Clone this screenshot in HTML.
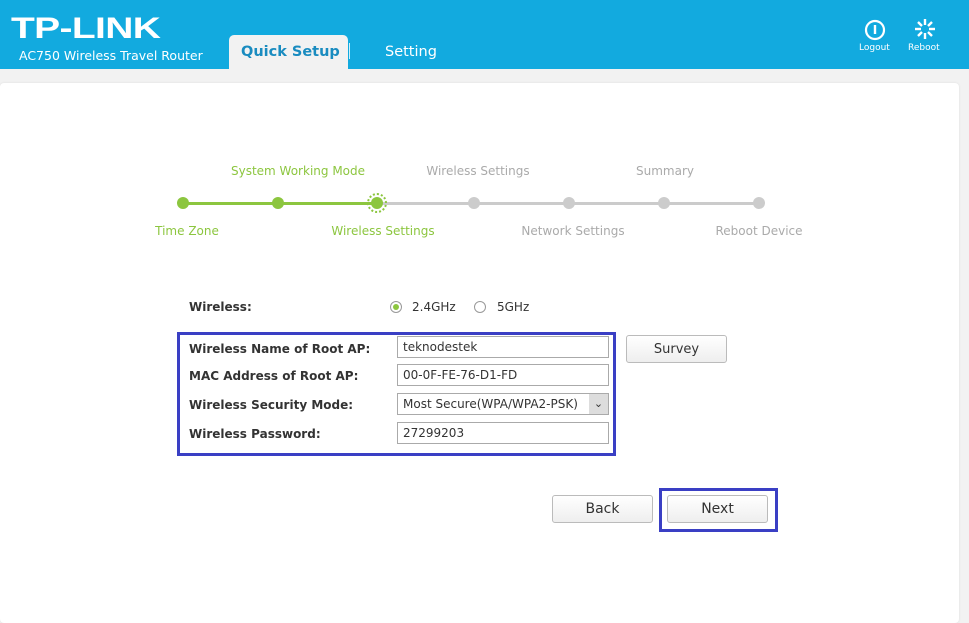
<!DOCTYPE html>
<html><head><style>
*{margin:0;padding:0;box-sizing:border-box}
body{width:969px;height:613px;background:#f2f2f2;font-family:"DejaVu Sans","Liberation Sans",sans-serif;position:relative;overflow:hidden}
.hdr{position:absolute;left:0;top:0;width:969px;height:69px;background:#12aadf}
.abs{position:absolute;white-space:nowrap}
.card{position:absolute;left:0;top:83px;width:959px;height:540px;background:#fff;border-radius:4px;box-shadow:0 0 2px #ddd}
.lbl{font-size:12px;font-weight:bold;color:#333}
.inp{position:absolute;height:22px;border:1px solid #aaa;font-size:12px;color:#333;padding:3px 5px;background:#fff}
.btn{position:absolute;height:28px;border:1px solid #bbb;border-radius:3px;background:linear-gradient(#fff,#eee);font-size:14px;color:#333;text-align:center;line-height:26px}
.dot{position:absolute;width:12px;height:12px;border-radius:50%;top:197px}
.step{font-size:12px;position:absolute;transform:translateX(-50%);white-space:nowrap}
</style></head><body>
<div class="hdr"></div>
<div class="abs" style="left:11px;top:14px;font-family:'Liberation Sans',sans-serif;font-weight:900;font-size:30px;color:#fff;letter-spacing:-0.5px;transform:scaleX(1.3);transform-origin:left;line-height:30px">TP-LINK</div>
<div class="abs" style="left:19px;top:48px;font-size:12.5px;color:#fff">AC750 Wireless Travel Router</div>
<div class="abs" style="left:229px;top:35px;width:119px;height:34px;background:#f2f2f2;border-radius:5px 5px 0 0"></div>
<div class="abs" style="left:241px;top:44px;font-size:14.5px;font-weight:bold;color:#1a8cc0">Quick Setup</div>
<div class="abs" style="left:349px;top:43px;width:1px;height:16px;background:#cfeefa"></div>
<div class="abs" style="left:385px;top:44px;font-size:14.5px;color:#fff">Setting</div>
<svg class="abs" style="left:864px;top:19px" width="22" height="22" viewBox="0 0 22 22"><circle cx="11" cy="11" r="9" fill="none" stroke="#fff" stroke-width="2.2"/><line x1="11" y1="6" x2="11" y2="15" stroke="#fff" stroke-width="2.4"/></svg>
<svg class="abs" style="left:914px;top:18px" width="22" height="22" viewBox="0 0 22 22" stroke="#fff" stroke-width="2.4"><line x1="11" y1="1" x2="11" y2="7"/><line x1="11" y1="15" x2="11" y2="21"/><line x1="1" y1="11" x2="7" y2="11"/><line x1="15" y1="11" x2="21" y2="11"/><line x1="4" y1="4" x2="8" y2="8"/><line x1="14" y1="14" x2="18" y2="18"/><line x1="18" y1="4" x2="14" y2="8"/><line x1="4" y1="18" x2="8" y2="14"/></svg>
<div class="abs" style="left:859px;top:43px;font-size:9px;color:#fff">Logout</div>
<div class="abs" style="left:908px;top:43px;font-size:9px;color:#fff">Reboot</div>
<div class="card"></div>
<div class="abs" style="left:183px;top:202px;width:194px;height:3px;background:#8cc63f"></div>
<div class="abs" style="left:377px;top:202px;width:382px;height:3px;background:#cbcbcb"></div>
<div class="dot" style="left:177px;background:#8cc63f"></div>
<div class="dot" style="left:272px;background:#8cc63f"></div>
<div class="abs" style="left:367px;top:193px;width:20px;height:20px;border-radius:50%;border:2px dotted #8cc63f"></div>
<div class="dot" style="left:371px;background:#8cc63f"></div>
<div class="dot" style="left:468px;background:#ccc"></div>
<div class="dot" style="left:563px;background:#ccc"></div>
<div class="dot" style="left:658px;background:#ccc"></div>
<div class="dot" style="left:753px;background:#ccc"></div>
<div class="step" style="left:298px;top:164px;color:#8cc63f">System Working Mode</div>
<div class="step" style="left:478px;top:164px;color:#aaa">Wireless Settings</div>
<div class="step" style="left:665px;top:164px;color:#aaa">Summary</div>
<div class="step" style="left:187px;top:224px;color:#8cc63f">Time Zone</div>
<div class="step" style="left:383px;top:224px;color:#8cc63f">Wireless Settings</div>
<div class="step" style="left:573px;top:224px;color:#aaa">Network Settings</div>
<div class="step" style="left:759px;top:224px;color:#aaa">Reboot Device</div>
<div class="abs lbl" style="left:189px;top:300px">Wireless:</div>
<div class="abs" style="left:390px;top:301px;width:12px;height:12px;border-radius:50%;border:1px solid #999"></div>
<div class="abs" style="left:393px;top:304px;width:6px;height:6px;border-radius:50%;background:#8cc63f"></div>
<div class="abs" style="left:412px;top:300px;font-size:12px;color:#333">2.4GHz</div>
<div class="abs" style="left:474px;top:301px;width:12px;height:12px;border-radius:50%;border:1px solid #999"></div>
<div class="abs" style="left:497px;top:300px;font-size:12px;color:#333">5GHz</div>
<div class="abs" style="left:177px;top:332px;width:439px;height:124px;border:3px solid #3a3fc4"></div>
<div class="abs lbl" style="left:189px;top:342px">Wireless Name of Root AP:</div>
<div class="abs lbl" style="left:189px;top:369px">MAC Address of Root AP:</div>
<div class="abs lbl" style="left:189px;top:398px">Wireless Security Mode:</div>
<div class="abs lbl" style="left:189px;top:427px">Wireless Password:</div>
<div class="inp" style="left:397px;top:336px;width:212px">teknodestek</div>
<div class="inp" style="left:397px;top:364px;width:212px">00-0F-FE-76-D1-FD</div>
<div class="inp" style="left:397px;top:393px;width:212px;padding-right:0">Most Secure(WPA/WPA2-PSK)</div>
<div class="abs" style="left:589px;top:394px;width:19px;height:20px;background:#ddd;font-size:11px;text-align:center;line-height:20px;color:#333">&#8964;</div>
<div class="inp" style="left:397px;top:422px;width:212px">27299203</div>
<div class="btn" style="left:626px;top:335px;width:101px;font-size:13px;line-height:27px">Survey</div>
<div class="btn" style="left:552px;top:495px;width:101px">Back</div>
<div class="abs" style="left:659px;top:488px;width:119px;height:44px;border:3px solid #3a3fc4"></div>
<div class="btn" style="left:667px;top:495px;width:101px">Next</div>
</body></html>
